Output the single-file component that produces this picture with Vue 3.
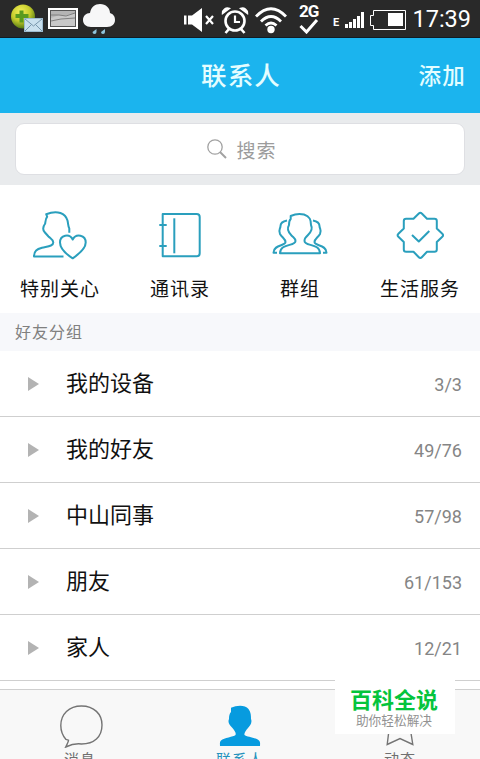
<template>
    <div class="screen">
        <div class="status-bar">
            <svg class="st-mail" width="34" height="30" viewBox="0 0 34 30">
                <defs>
                    <radialGradient id="ball" cx="40%" cy="30%" r="70%">
                        <stop offset="0" stop-color="#f4ef5a" />
                        <stop offset=".55" stop-color="#c6cc2c" />
                        <stop offset="1" stop-color="#557c16" />
                    </radialGradient>
                </defs>
                <circle cx="13" cy="12.500" r="12" fill="url(#ball)" />
                <path d="M9.500 6.500h4v3.500h5v4h-5v4.500h-4v-4.500h-4v-4h4z" fill="#5a9a1f" />
                <rect x="14.500" y="14.500" width="18" height="13" fill="#c9e0ee" stroke="#9dbbd0" />
                <path d="M15 15l8.500 7 8.500-7M15 27l6.500-6.500M32 27l-6.500-6.500" fill="none" stroke="#7897ad" />
            </svg>
            <svg class="st-picture" width="30" height="21" viewBox="0 0 30 21">
                <rect width="30" height="21" fill="#fff" />
                <rect x="2.500" y="2.500" width="25" height="16" fill="#b4b4b4" stroke="#555" />
                <path d="M3 10l8-3 5 1 11-3v13H3z" fill="#c8c8c8" />
                <path d="M3 7l8 0 7 1 9-3M3 13l10-2 14-1" fill="none" stroke="#808080" />
            </svg>
            <svg class="st-rain" width="33" height="32" viewBox="0 0 33 32">
                <path d="M8 23C3 23 0 20 0 16c0-4 3-7 7-7C8 3 12 0 17 0c6 0 10 4 10 9 3 1 5 3 5 7 0 4-3 7-8 7z" fill="#f7f7f8" />
                <path d="M13.500 25v3a2 2 0 1 1-4 0zM22 25v3a2 2 0 1 1-4 0z" fill="#8fc4dc" />
            </svg>
            <svg class="st-mute" width="31" height="26" viewBox="0 0 31 26">
                <path d="M0 8.500h2.500v9H0zM4 8.500h4L18 1v24L8 17.500H4z" fill="#fff" />
                <path d="M22 9l7 8M29 9l-7 8" stroke="#fff" stroke-width="2.200" />
            </svg>
            <svg class="st-alarm" width="28" height="28" viewBox="0 0 28 28" fill="none" stroke="#fff">
                <circle cx="14" cy="15" r="9.500" stroke-width="2.600" />
                <path d="M14 9.500V16h5" stroke-width="2.200" />
                <path d="M8 23l-3.500 4M20 23l3.500 4" stroke-width="2.600" />
                <path d="M1.500 7.500a5 5 0 0 1 7-5zM26.500 7.500a5 5 0 0 0-7-5z" fill="#fff" stroke-width="1.500" />
            </svg>
            <svg class="st-wifi" width="32" height="28" viewBox="0 0 32 28" fill="none" stroke="#fff" stroke-width="2.800">
                <path d="M1 10.500Q16-5 31 10.500M6 15.500q10-10 20 0M10.500 19.500q5.500-5 11 0" />
                <circle cx="16" cy="23.500" r="3.700" fill="#fff" stroke="none" />
            </svg>
            <div class="st-network">
                <span>2G</span>
                <svg width="20" height="15" viewBox="0 0 20 15">
                    <path d="M1.500 7l6 6L18 1" fill="none" stroke="#fff" stroke-width="3" />
                </svg>
            </div>
            <span class="st-edge">E</span>
            <svg class="st-signal" width="19" height="16" viewBox="0 0 19 16">
                <path d="M0 12h3v4H0zM4 10h3v6H4zM8 7h3v9H8zM12 4h3v12h-3zM16 0h3v16h-3z" fill="#fff" />
            </svg>
            <svg class="st-battery" width="36" height="20" viewBox="0 0 36 20">
                <path d="M3.500 .500h32v19h-32v-4h-3v-10h3z" fill="none" stroke="#fff" />
                <rect x="18" y="3" width="15" height="13" fill="#fff" />
            </svg>
            <span class="st-time">17:39</span>
        </div>

        <header class="title-bar">
            <h1>联系人</h1>
            <button class="add-btn">添加</button>
        </header>

        <div class="search-wrap">
            <div class="search-box">
                <svg width="20" height="20" viewBox="0 0 20 20" fill="none" stroke="#a2a2a2">
                    <circle cx="8" cy="8" r="7.200" stroke-width="1.300" />
                    <path d="M13 13l6 6" stroke-width="1.900" />
                </svg>
                <span>搜索</span>
            </div>
        </div>

        <nav class="shortcuts">
            <a v-for="item in shortcuts" :key="item.label" class="shortcut">
                <svg width="60" height="60" viewBox="0 0 60 60">
                    <path v-for="d in item.paths" :key="d" :d="d" />
                </svg>
                <span>{{ item.label }}</span>
            </a>
        </nav>

        <div class="section-title">好友分组</div>

        <ul class="groups">
            <li v-for="group in groups" :key="group.name" class="group">
                <i class="arrow"></i>
                <span class="group-name">{{ group.name }}</span>
                <span class="group-count">{{ group.count }}</span>
            </li>
        </ul>

        <footer class="tab-bar">
            <div class="tab">
                <svg width="48" height="46" viewBox="0 0 48 46">
                    <path d="M10 37.500C6.500 33.500 4.800 29 4.800 23.500C4.800 12 13 4 25.500 4C38 4 46 12 46 23C46 35 38 42 25.500 42C20 41.300 15 42.500 9.700 45C11 42.500 12.500 39.500 12.500 38.200Z" />
                </svg>
                <span>消息</span>
            </div>
            <div class="tab active">
                <svg width="48" height="46" viewBox="0 0 48 46">
                    <path d="M15 5.800C21 3.200 29 2.800 32.500 7C35 10 35 14 35 17C36.500 20.500 34 23.500 32 26C29.500 29 28 31 28.500 33C30.500 35 40 35.500 43 38.500C44.500 40 44 42 44 44H4C4 42 3.500 40 5 38.500C8 35.500 17.500 35 19.500 33C20.500 30.500 18 28 16 25.500C13.500 23 11.500 20.500 13 17C13 14 13.500 11.500 15 10Z" />
                </svg>
                <span>联系人</span>
            </div>
            <div class="tab">
                <svg width="48" height="46" viewBox="0 0 48 46">
                    <path d="M24 4L30 16L43.500 18L34.500 28L36.800 42.500L24 36.500L11.200 42.500L13 28L4.500 18L18 16Z" />
                </svg>
                <span>动态</span>
            </div>
        </footer>

        <div class="stamp">
            <strong>百科全说</strong>
            <small>助你轻松解决</small>
        </div>
    </div>
</template>

<script setup>
const shortcuts = [
    {
        label: '特别关心',
        paths: [
            'M39.300 27.700V23.500C38 21.500 38.300 19 37.500 15.500C35 7 26.500 6.500 21 7.700L16.200 9.200L17.200 11.800C15.500 13.500 15.500 16 15.200 18.500C13 21.500 12.500 24.500 14.500 27L18.500 31.500C20.500 33.500 23.300 34.500 23.300 37.500C23.300 41.500 17 41.500 12 42.800C7 44.200 4 45.500 4 51.500H33.500',
            'M42.700 53.300C36 49 30 44 30 37.500C30 30 39.500 28 42.700 34.500C46 28 55.700 30 55.700 37.500C55.700 44 49 49 42.700 53.300Z',
        ],
    },
    {
        label: '通讯录',
        paths: [
            'M12.700 9H46.700Q49.700 9 49.700 12V48.300Q49.700 51.300 46.700 51.300H12.700Z',
            'M24.300 13.300V48.300',
            'M9.300 20H16.700M9.300 41H16.700',
        ],
    },
    {
        label: '群组',
        paths: [
            'M20.700 11C26 8.500 30 8.500 34 9.500C40 11.500 41 15 41 20C43 24 41 27 38 30C35 33 34.500 33.500 34.500 36C34.500 41.500 50 38 50 48.300H10C10 38 25.500 41.500 25.500 36C25.500 33.500 24 33 21.500 30.500C18.500 27.500 16.500 24 19 20C19 17.500 19 15.500 20.700 14Z',
            'M17 15.500C12 16.500 10.500 18 10.500 21C10.500 24 8 25 10 29C12 32.500 15.500 34 15.500 37C15.500 41 3.500 39.500 3.500 47.700H7',
            'M43 15.500C48 16.500 49.500 18 49.500 21C49.500 24 52 25 50 29C48 32.500 44.500 34 44.500 37C44.500 41 56.500 39.500 56.500 47.700H53',
        ],
    },
    {
        label: '生活服务',
        paths: [
            'M28.800 8.500Q30.300 6.800 31.800 8.500L37 13.800H44.500Q46.800 13.800 46.800 16.100V23.500L52.300 28.800Q53.900 30.300 52.300 31.800L46.800 37V44.500Q46.800 46.800 44.500 46.800H37L31.800 52.200Q30.300 53.800 28.800 52.200L23.500 46.800H16.100Q13.800 46.800 13.800 44.500V37L8.400 31.800Q6.800 30.300 8.400 28.800L13.800 23.500V16.100Q13.800 13.800 16.100 13.800H23.500Z',
            'M22 30L28.800 36.500L39.300 26',
        ],
    },
];

const groups = [
    { name: '我的设备', count: '3/3' },
    { name: '我的好友', count: '49/76' },
    { name: '中山同事', count: '57/98' },
    { name: '朋友', count: '61/153' },
    { name: '家人', count: '12/21' },
];
</script>

<style>
body {
    margin: 0;
    overflow: hidden;
}
</style>

<style scoped>
.screen {
    position: relative;
    width: 480px;
    height: 759px;
    overflow: hidden;
    display: flex;
    flex-direction: column;
    background: #fff;
    font-family: Roboto, 'Noto Sans CJK SC', sans-serif;
    color: #111;
}

.screen > * { flex-shrink: 0; }

/* Status bar */
.status-bar {
    height: 38px;
    box-sizing: border-box;
    padding: 0 9px 0 10px;
    display: flex;
    align-items: center;
    background: #292929;
    border-bottom: 1px solid #101c26;
    color: #fff;
}

.status-bar svg { display: block; flex-shrink: 0; }
.st-picture { margin-left: 4px; }
.st-rain { margin: 2px 0 0 5px; }
.st-mute { margin: 2px 0 0 68px; }
.st-alarm { margin: 3px 0 0 6px; }
.st-wifi { margin: 2px 0 0 6px; }

.st-network {
    width: 20px;
    margin-left: 12px;
    font-size: 17px;
    font-weight: 700;
    line-height: 15px;
    letter-spacing: -1px;
}

.st-network span { display: block; }

.st-edge {
    width: 12px;
    margin: 9px 0 0 14px;
    font-size: 11px;
    font-weight: 700;
    line-height: 12px;
}

.st-signal { margin-top: 2px; }
.st-battery { margin: 2px 0 0 6px; }

.st-time {
    margin-left: auto;
    font-size: 23.500px;
    line-height: 36px;
}

/* Title */
.title-bar {
    height: 75px;
    display: grid;
    grid-template-columns: 1fr auto 1fr;
    align-items: center;
    background: #1bb4ee;
    color: #e4fdff;
}

.title-bar h1 {
    grid-column: 2;
    margin: 0;
    padding-left: 2px;
    font-size: 25.500px;
    font-weight: 500;
    letter-spacing: 1.200px;
    line-height: 36px;
}

.add-btn {
    justify-self: end;
    margin: 0 14px 0 0;
    padding: 0;
    border: none;
    background: none;
    color: inherit;
    font: 500 22.500px/32px Roboto, 'Noto Sans CJK SC', sans-serif;
    letter-spacing: 1.200px;
}

/* Search */
.search-wrap {
    height: 72px;
    box-sizing: border-box;
    padding: 10px 15px;
    background: #e9ebed;
}

.search-box {
    height: 52px;
    box-sizing: border-box;
    display: flex;
    align-items: center;
    justify-content: center;
    gap: 9px;
    padding-left: 4px;
    background: #fff;
    border: 1px solid #dedfe3;
    border-radius: 9px;
    color: #9c9c9c;
    font-size: 19px;
    letter-spacing: 1px;
}

/* Shortcuts */
.shortcuts {
    height: 128px;
    display: grid;
    grid-template-columns: repeat(4, 1fr);
}

.shortcut {
    display: flex;
    flex-direction: column;
    align-items: center;
    padding-top: 20px;
    font-size: 19px;
    letter-spacing: 1px;
    line-height: 28px;
}

.shortcut svg {
    margin-bottom: 11px;
    fill: none;
    stroke: #2a9fbd;
    stroke-width: 2;
    stroke-linejoin: round;
}

.section-title {
    height: 38px;
    box-sizing: border-box;
    padding: 1px 0 0 15px;
    background: #f7f8fb;
    color: #808080;
    font-size: 16px;
    letter-spacing: 1px;
    line-height: 38px;
}

/* Friend groups */
.groups {
    margin: 0;
    padding: 0;
    list-style: none;
}

.group {
    height: 66px;
    box-sizing: border-box;
    display: flex;
    align-items: center;
    padding: 0 18px 0 28px;
    border-bottom: 1px solid #cfcfcf;
}

.arrow {
    border: solid transparent;
    border-width: 7.500px 0 7.500px 11px;
    border-left-color: #b3b3b3;
}

.group-name {
    margin-left: 27px;
    font-size: 22px;
    line-height: 32px;
}

.group-count {
    margin: 2px 0 0 auto;
    color: #858585;
    font-size: 18px;
}

/* Tabs */
.tab-bar {
    height: 70px;
    margin-top: 8px;
    box-sizing: border-box;
    display: grid;
    grid-template-columns: repeat(3, 160px);
    background: #f8f8f8;
    border-top: 1px solid #cfcfcf;
}

.tab {
    display: flex;
    flex-direction: column;
    align-items: center;
    padding-top: 12px;
    color: #707070;
    font-size: 15px;
    letter-spacing: 1px;
    line-height: 22px;
}

.tab svg {
    margin-bottom: 1px;
    flex-shrink: 0;
    fill: none;
    stroke: #747474;
    stroke-width: 1.400;
}

.tab.active { color: #2592bd; }

.tab.active svg {
    fill: #079bdf;
    stroke: none;
}

/* Stamp in the lower right corner */
.stamp {
    position: absolute;
    left: 335px;
    top: 679px;
    width: 120px;
    height: 55px;
    box-sizing: border-box;
    padding-right: 2px;
    display: flex;
    flex-direction: column;
    align-items: center;
    background: #fff;
}

.stamp strong {
    margin-top: 6px;
    color: #05c43c;
    font-size: 22px;
    font-weight: 700;
    line-height: 32px;
}

.stamp small {
    margin-top: -5px;
    color: #929292;
    font-size: 12.700px;
    line-height: 18px;
}
</style>
